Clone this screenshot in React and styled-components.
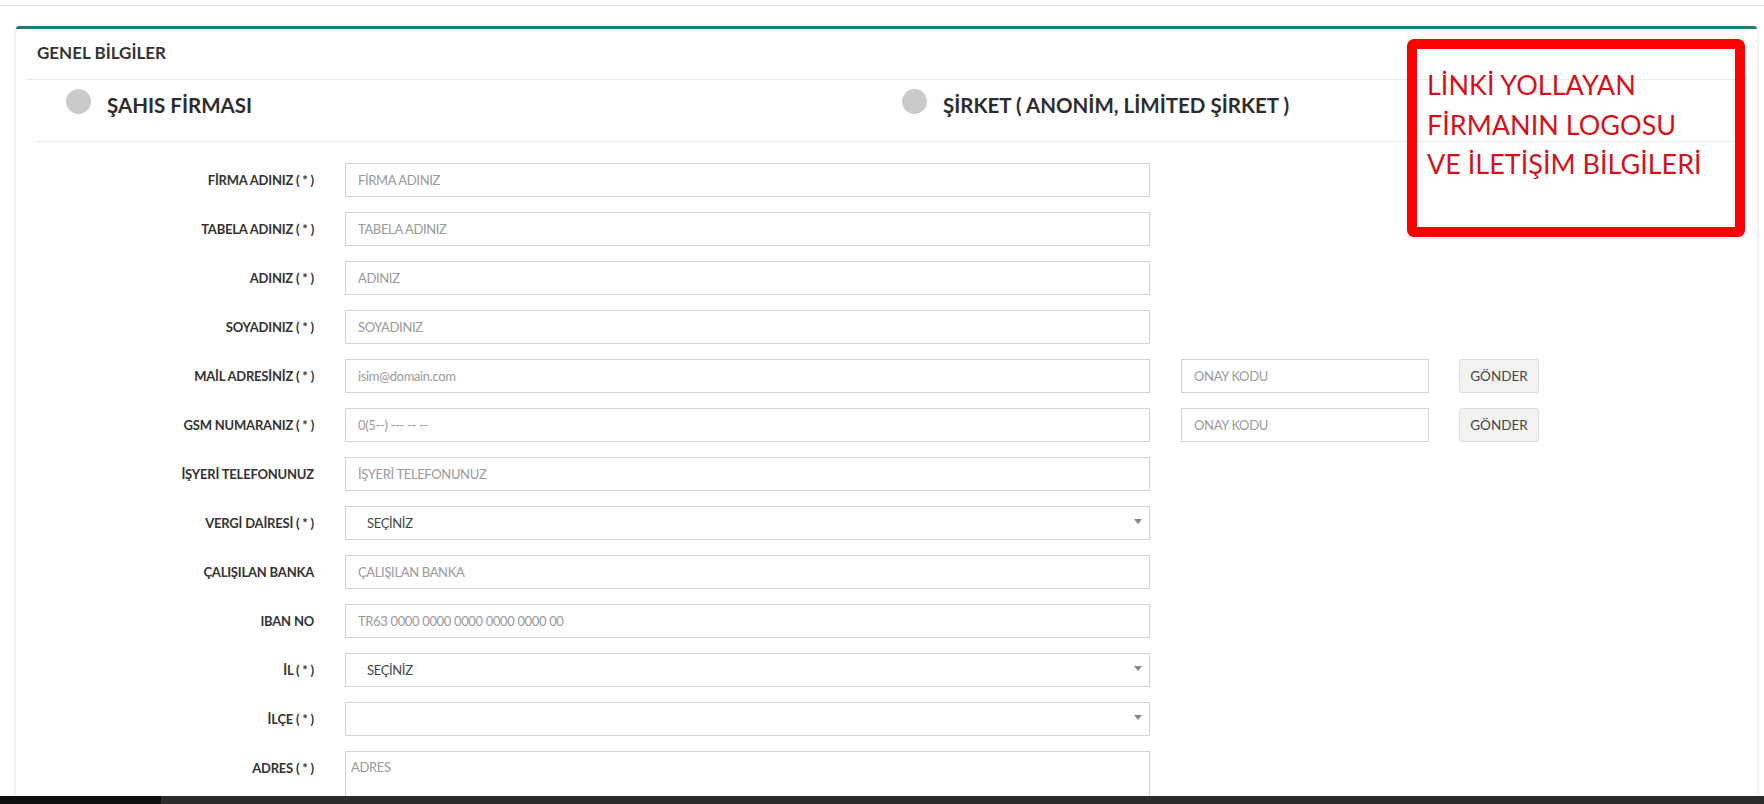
import React from 'react';
import styled, { createGlobalStyle } from 'styled-components';

const GlobalStyle = createGlobalStyle`
    html, body {
        margin: 0;
        padding: 0;
        background: #fff;
        font-family: Lato, "Open Sans", "Liberation Sans", sans-serif;
    }
    * { box-sizing: border-box; }
`;

const fields = [
    { label: 'FİRMA ADINIZ ( * )', placeholder: 'FİRMA ADINIZ' },
    { label: 'TABELA ADINIZ ( * )', placeholder: 'TABELA ADINIZ' },
    { label: 'ADINIZ ( * )', placeholder: 'ADINIZ' },
    { label: 'SOYADINIZ ( * )', placeholder: 'SOYADINIZ' },
    { label: 'MAİL ADRESİNİZ ( * )', placeholder: 'isim@domain.com', verify: true },
    { label: 'GSM NUMARANIZ ( * )', placeholder: '0(5--) --- -- --', verify: true },
    { label: 'İŞYERİ TELEFONUNUZ', placeholder: 'İŞYERİ TELEFONUNUZ' },
    { label: 'VERGİ DAİRESİ ( * )', select: 'SEÇİNİZ' },
    { label: 'ÇALIŞILAN BANKA', placeholder: 'ÇALIŞILAN BANKA' },
    { label: 'IBAN NO', placeholder: 'TR63 0000 0000 0000 0000 0000 00' },
    { label: 'İL ( * )', select: 'SEÇİNİZ' },
    { label: 'İLÇE ( * )', select: '' },
    { label: 'ADRES ( * )', placeholder: 'ADRES', textarea: true },
];

const App = () => {
    return (
        <Page>
            <GlobalStyle />
            <TopBar />
            <Main>
                <Card>
                    <CardHeader>GENEL BİLGİLER</CardHeader>
                    <RadioRow>
                        <RadioOption>
                            <Radio />
                            <RadioLabel>ŞAHIS FİRMASI</RadioLabel>
                        </RadioOption>
                        <RadioOption>
                            <Radio />
                            <RadioLabel>ŞİRKET ( ANONİM, LİMİTED ŞİRKET )</RadioLabel>
                        </RadioOption>
                    </RadioRow>
                    <Form>
                        {fields.map((f) => (
                            <FormRow key={f.label} $tall={f.textarea}>
                                <Label $top={f.textarea}>{f.label}</Label>
                                {f.textarea ? (
                                    <TextArea placeholder={f.placeholder} />
                                ) : f.select !== undefined ? (
                                    <SelectBox>
                                        <span>{f.select}</span>
                                        <Caret />
                                    </SelectBox>
                                ) : (
                                    <Input placeholder={f.placeholder} />
                                )}
                                {f.verify && (
                                    <>
                                        <Input placeholder="ONAY KODU" />
                                        <SendButton>GÖNDER</SendButton>
                                    </>
                                )}
                            </FormRow>
                        ))}
                    </Form>
                    <Note>
                        LİNKİ YOLLAYAN<br />
                        FİRMANIN LOGOSU<br />
                        VE İLETİŞİM BİLGİLERİ
                    </Note>
                </Card>
            </Main>
            <TaskBar>
                <TaskStart />
            </TaskBar>
        </Page>
    );
};

const Page = styled.div`
    height: 100vh;
    display: flex;
    flex-direction: column;
    overflow: hidden;
`;

const TopBar = styled.div`
    height: 6px;
    flex-shrink: 0;
    border-bottom: 1px solid #e2e2e2;
`;

const Main = styled.div`
    flex: 1;
    overflow: hidden;
    padding: 20px 7px 0 16px;
`;

const Card = styled.div`
    position: relative;
    height: 100%;
    background: #fff;
    border-top: 3px solid #1d7a77;
    border-radius: 3px 3px 0 0;
    box-shadow: 0 1px 4px rgba(0, 0, 0, 0.14);
    padding: 0 10px;
`;

const CardHeader = styled.div`
    height: 51px;
    padding: 13px 11px 0;
    border-bottom: 1px solid #ececec;
    font-size: 17px;
    font-weight: 700;
    color: #333;
`;

const RadioRow = styled.div`
    display: grid;
    grid-template-columns: 836px 1fr;
    height: 62px;
    margin: 0 9px;
    padding: 9px 0 0 31px;
    border-bottom: 1px solid #ececec;
`;

const RadioOption = styled.label`
    display: flex;
    align-items: flex-start;
    gap: 16px;
`;

const Radio = styled.span`
    width: 25px;
    height: 25px;
    border-radius: 50%;
    background: #cacaca;
    flex-shrink: 0;
`;

const RadioLabel = styled.span`
    font-size: 20.5px;
    font-weight: 700;
    color: #2d2d2d;
    line-height: 26px;
    margin-top: 3px;
`;

const Form = styled.div`
    display: flex;
    flex-direction: column;
    gap: 15px;
    padding-top: 21px;
`;

const FormRow = styled.div`
    display: grid;
    grid-template-columns: 288px 805px 248px 79px;
    column-gap: 31px;
    height: ${(p) => (p.$tall ? '90px' : '34px')};
    align-items: ${(p) => (p.$tall ? 'stretch' : 'center')};
`;

const Label = styled.div`
    text-align: right;
    font-size: 13px;
    font-weight: 700;
    letter-spacing: -0.2px;
    color: #333;
    padding-top: ${(p) => (p.$top ? '9px' : '0')};
`;

const fieldBox = `
    height: 34px;
    border: 1px solid #d4d4d4;
    background: #fff;
    font-family: Lato, "Open Sans", sans-serif;
    font-size: 13px;
    letter-spacing: -0.35px;
    color: #444;
    border-radius: 0;
`;

const Input = styled.input`
    ${fieldBox}
    width: 100%;
    padding: 0 12px;
    outline: none;
    &::placeholder { color: #9a9a9a; }
`;

const TextArea = styled.textarea`
    ${fieldBox}
    height: 100%;
    width: 100%;
    padding: 7px 5px;
    resize: none;
    outline: none;
    &::placeholder { color: #9a9a9a; }
`;

const SelectBox = styled.div`
    ${fieldBox}
    display: flex;
    align-items: center;
    justify-content: space-between;
    padding: 0 7px 0 21px;
`;

const Caret = styled.span`
    width: 0;
    height: 0;
    border-left: 4px solid transparent;
    border-right: 4px solid transparent;
    border-top: 5px solid #888;
    margin-top: -3px;
`;

const SendButton = styled.button`
    height: 34px;
    margin-left: -1px;
    border: 1px solid #dcdcdc;
    border-radius: 3px;
    background: #f2f2f2;
    font-family: Lato, "Open Sans", sans-serif;
    font-size: 13.5px;
    color: #444;
    padding: 0;
`;

const Note = styled.div`
    position: absolute;
    top: 10px;
    right: 12px;
    width: 338px;
    height: 198px;
    border: 10px solid #ff0000;
    border-radius: 7px;
    padding: 16px 0 0 10px;
    font-size: 27px;
    line-height: 39.5px;
    color: #d4121c;
`;

const TaskBar = styled.div`
    height: 8px;
    flex-shrink: 0;
    background: #2c2c2c;
    display: flex;
`;

const TaskStart = styled.div`
    width: 161px;
    background: #0f0f0f;
`;

export default App;
